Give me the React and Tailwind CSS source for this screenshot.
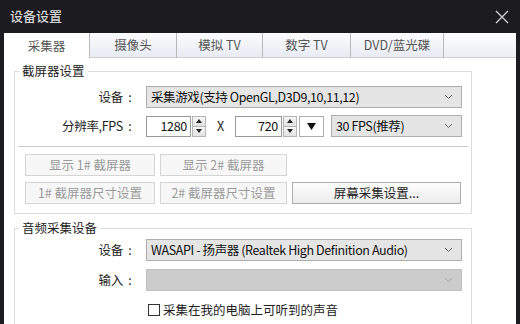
import { useState } from 'react'

const FONT = { fontFamily: '"Segoe UI", "Noto Sans CJK SC", "Noto Sans", sans-serif' }

const TABS = [
  { name: '采集器', w: 'w-[86px]' },
  { name: '摄像头', w: 'w-[87px]' },
  { name: '模拟 TV', w: 'w-[86px]' },
  { name: '数字 TV', w: 'w-[88px]' },
  { name: 'DVD/蓝光碟', w: 'w-[93px]' },
]

function Chevron({ color = '#555' }) {
  return (
    <svg width="9" height="6" viewBox="0 0 9 6" className="shrink-0">
      <path d="M1 1 L4.5 4.5 L8 1" fill="none" stroke={color} strokeWidth="1" />
    </svg>
  )
}

function Select({ text, width, disabled }) {
  return (
    <div
      className={
        'h-[22px] flex items-center justify-between pl-[4px] pr-[8px] border ' +
        (disabled ? 'bg-[#cccccc] border-[#bfbfbf]' : 'bg-[#e5e5e5] border-[#adadad]') +
        ' ' + width
      }
    >
      <span className="text-[#111] whitespace-nowrap tracking-[-0.4px]">{text}</span>
      <Chevron color={disabled ? '#a8a8a8' : '#666'} />
    </div>
  )
}

function Spin({ value, width }) {
  return (
    <div className={'h-[21px] flex ' + width}>
      <div className="flex-1 border border-[#9a9a9a] bg-white flex items-center justify-end pr-[3px] text-[#111] tracking-[-0.3px]">
        {value}
      </div>
      <div className="w-[14px] flex flex-col ml-[1px]">
        <div className="flex-1 border border-[#b5b5b5] bg-gradient-to-b from-[#f6f6f6] to-[#e2e2e2] flex items-center justify-center">
          <svg width="6" height="4" viewBox="0 0 6 4"><path d="M0 4 L3 0 L6 4 Z" fill="#222" /></svg>
        </div>
        <div className="flex-1 border border-t-0 border-[#b5b5b5] bg-gradient-to-b from-[#f6f6f6] to-[#e2e2e2] flex items-center justify-center">
          <svg width="6" height="4" viewBox="0 0 6 4"><path d="M0 0 L3 4 L6 0 Z" fill="#222" /></svg>
        </div>
      </div>
    </div>
  )
}

function Btn({ children, width, disabled }) {
  return (
    <button
      className={
        'h-[22px] border flex items-center justify-center ' +
        (disabled
          ? 'border-[#d5d5d5] bg-[#f7f7f7] text-[#9a9a9a]'
          : 'border-[#adadad] bg-gradient-to-b from-[#fdfdfd] to-[#ececec] text-[#222]') +
        ' ' + width
      }
    >
      {children}
    </button>
  )
}

function Row({ label, children, className = '' }) {
  return (
    <div className={'flex items-center ' + className}>
      <div className="w-[122px] flex justify-end text-[#222]">
        <span className="tracking-[-0.3px]">{label}</span>
        <span className="w-[14px] text-center">:</span>
      </div>
      <div className="ml-[9px] flex items-center">{children}</div>
    </div>
  )
}

export default function App() {
  const [tab, setTab] = useState(0)
  const [hear, setHear] = useState(false)

  return (
    <div className="w-[520px] h-[324px] bg-[#1c1c20] flex flex-col overflow-hidden text-[12.5px] leading-[18px]" style={FONT}>
      <div className="h-[33px] flex items-center justify-between pl-[10px] pr-[11px] shrink-0">
        <span className="text-[13px] text-[#d6d6d6] font-medium -mt-[2px]">设备设置</span>
        <svg width="14" height="14" viewBox="0 0 14 14">
          <path d="M1 1 L13 13 M13 1 L1 13" stroke="#cfcfcf" strokeWidth="1.4" />
        </svg>
      </div>

      <div className="flex-1 ml-[4px] mr-[4px] bg-white flex flex-col">
        <div className="h-[25px] flex shrink-0">
          {TABS.map((t, i) => (
            <div
              key={t.name}
              onClick={() => setTab(i)}
              className={
                'h-full flex items-center justify-center text-[#555] border-r border-[#b8b8b8] ' + t.w + ' ' +
                (tab === i ? 'bg-white' : 'bg-gradient-to-b from-[#fcfcfd] to-[#e8ebf3] border-b border-b-[#d0d0d0]')
              }
            >
              {t.name}
            </div>
          ))}
          <div className="flex-1 h-full bg-gradient-to-b from-[#fcfcfd] to-[#eceef5] border-b border-[#d0d0d0]" />
        </div>

        <fieldset className="ml-[10px] mt-[4px] w-[458px] border border-[#dcdcdc] px-0 pb-[9px]">
          <legend className="ml-[4px] px-[3px] text-[#222]">截屏器设置</legend>
          <Row label="设备" className="mt-[6px]">
            <Select text="采集游戏(支持 OpenGL,D3D9,10,11,12)" width="w-[316px]" />
          </Row>
          <Row label="分辨率,FPS" className="mt-[7px]">
            <Spin value="1280" width="w-[60px]" />
            <span className="w-[29px] text-center text-[#222]">X</span>
            <Spin value="720" width="w-[62px]" />
            <div className="ml-[2px] w-[25px] h-[21px] border border-[#adadad] bg-white flex items-center justify-center">
              <svg width="9" height="7" viewBox="0 0 9 7"><path d="M0 0 L9 0 L4.5 7 Z" fill="#111" /></svg>
            </div>
            <div className="ml-[7px]">
              <Select text="30 FPS(推荐)" width="w-[131px]" />
            </div>
          </Row>
          <div className="mx-[3px] mt-[9px] border-t border-[#c8c8c8] border-b border-b-white" />
          <div className="ml-[10px] mt-[6px] flex gap-[5px]">
            <Btn width="w-[130px]" disabled>显示 1# 截屏器</Btn>
            <Btn width="w-[127px]" disabled>显示 2# 截屏器</Btn>
          </div>
          <div className="ml-[10px] mt-[6px] flex gap-[5px]">
            <Btn width="w-[130px]" disabled>1# 截屏器尺寸设置</Btn>
            <Btn width="w-[127px]" disabled>2# 截屏器尺寸设置</Btn>
            <Btn width="w-[169px]">屏幕采集设置...</Btn>
          </div>
        </fieldset>

        <fieldset className="ml-[10px] mt-[5px] w-[458px] flex-1 border border-b-0 border-[#dcdcdc] px-0">
          <legend className="ml-[4px] px-[3px] text-[#222]">音频采集设备</legend>
          <Row label="设备" className="mt-[2px]">
            <Select text="WASAPI - 扬声器 (Realtek High Definition Audio)" width="w-[316px]" />
          </Row>
          <Row label="输入" className="mt-[8px]">
            <Select text="" width="w-[316px]" disabled />
          </Row>
          <label className="ml-[133px] mt-[10px] flex items-center gap-[3px] text-[#222] cursor-default">
            <span
              onClick={() => setHear(!hear)}
              className="w-[12px] h-[12px] border border-[#333] bg-white flex items-center justify-center"
            >
              {hear && <span className="w-[6px] h-[6px] bg-[#333]" />}
            </span>
            采集在我的电脑上可听到的声音
          </label>
        </fieldset>
      </div>
    </div>
  )
}
